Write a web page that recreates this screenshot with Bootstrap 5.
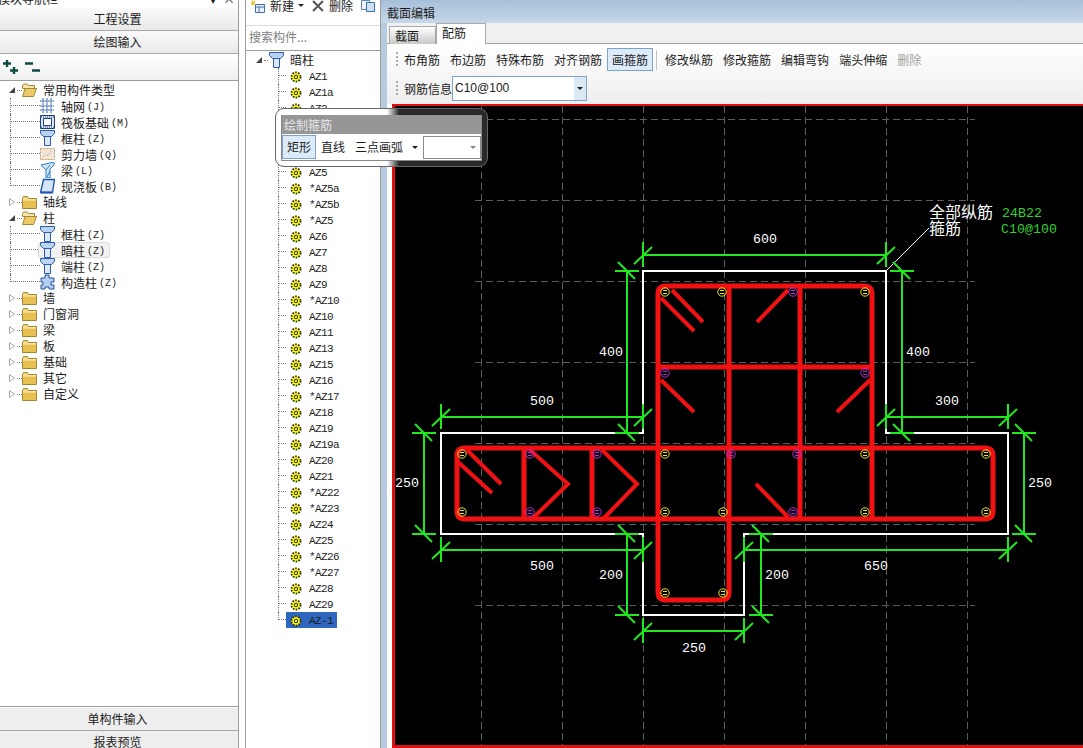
<!DOCTYPE html>
<html lang="zh-CN">
<head>
  <meta charset="UTF-8">
  <title>截面编辑</title>
  <link href="https://cdn.jsdelivr.net/npm/bootstrap@5.3.0/dist/css/bootstrap.min.css" rel="stylesheet">
  <style>
    body {
      margin: 0;
      background: #fff;
      overflow: hidden;
      color: #1c1c1c;
      font: 12px/16px "Liberation Mono", "Noto Sans CJK SC", monospace;
    }
    .app-frame { width: 1083px; height: 748px; overflow: hidden; position: relative; }
    .cjk { font-family: "Noto Sans CJK SC", sans-serif; }
    .flex-none { flex: none; }

    /* left navigation */
    .nav-col { width: 239px; border-right: 1px solid #9c9c9c; }
    .nav-title { height: 8px; overflow: hidden; }
    .nav-title-text { margin: -7px 0 0 -2px; line-height: 12px; }
    .nav-pin { margin: -7px 0 0 auto; padding-right: 3px; line-height: 12px; width: 28px; }
    .bar-btn {
      --bs-btn-padding-y: 0;
      --bs-btn-padding-x: 0;
      --bs-btn-font-size: 12px;
      --bs-btn-line-height: 1;
      height: 23px;
      width: 100%;
      padding-right: 3px;
      border: 0;
      border-bottom: 1px solid #a8a8a8;
      border-radius: 0;
      color: #1c1c1c;
      font-family: "Noto Sans CJK SC", sans-serif;
      background: linear-gradient(#fafafa, #e9e9e9);
      flex: none;
    }
    .bar-btn.flat { background: #eee; }
    .bar-btn.cut { height: 17px; padding-top: 5px; border-bottom: 0; line-height: 12px; vertical-align: top; display: block; }
    .bar-btn.first { margin-top: 1px; }
    .tool-strip { height: 26px; padding: 6px 3px 0; background: linear-gradient(#fff, #f0f0f0); gap: 6px; flex: none; }
    .nav-tree { border-top: 1px solid #9c9c9c; border-bottom: 1px solid #9c9c9c; padding-top: 1px; min-height: 0; }

    /* tree rows */
    .t-row { height: 16px; white-space: nowrap; }
    .t-twist { width: 8px; height: 8px; margin-left: 8px; flex: none; }
    .t-dot { width: 5px; margin: 0 0 0 1px; border-top: 1px dotted #888; flex: none; }
    .t-lnk { width: 30px; height: 16px; margin-left: 10px; border-left: 1px dotted #777; flex: none; align-self: flex-start; }
    .t-lnk::after { content: ""; display: block; margin-top: 7px; border-top: 1px dotted #777; }
    .t-lnk.last { height: 8px; }
    .t-hover { background: #f2f2f2; border: 1px solid #ddd; border-radius: 3px; margin: 0 0 0 -2px; padding: 0 4px 0 1px; height: 16px; }
    .t-label { margin-left: 6px; }
    .t-kid { margin-left: 6px; padding-top: 2px; }
    .t-code { font: 10px "Liberation Mono", monospace; margin-left: 2px; padding-top: 3px; }

    /* middle list */
    .list-col { width: 136px; margin-left: 6px; border-left: 1px solid #9c9c9c; border-right: 1px solid #9c9c9c; }
    .list-tools { height: 25px; padding-left: 4px; line-height: 12px; }
    .list-tools svg { flex: none; }
    .list-del { margin-left: 5px; }
    .list-search {
      height: 25px;
      padding: 0 3px 4px;
      border: 0;
      border-top: 1px solid #ddd;
      border-radius: 0;
      font: 12px "Noto Sans CJK SC", sans-serif;
      background: #fff;
    }
    .list-search::placeholder { color: #808080; opacity: 1; }
    .list-tree { border-top: 1px solid #9c9c9c; padding-top: 1px; }
    .az-head { padding-left: 1px; }
    .az-head .t-dot { width: 4px; margin-right: 1px; }
    .az-lnk { width: 8px; margin-left: 32px; }
    .az-name { padding: 2px 4px 0; height: 16px; gap: 7px; font-size: 11px; letter-spacing: -.6px; }
    .az-name.on { background: #2f66c0; }

    /* section editor */
    .edit-col { background: #b6cbe2; min-width: 0; }
    .edit-head { height: 23px; padding: 5px 0 0 6px; line-height: 16px; background: linear-gradient(#a6c0da, #c6d7e8); }
    .edit-body { padding-left: 6px; min-height: 0; }
    .edit-inner { background: #fff; min-height: 0; }
    .tab-strip { height: 21px; padding-left: 2px; background: #f0f0f0; border-bottom: 1px solid #a0a0a0; }
    .tab-strip .nav-link {
      width: 47px;
      height: 18px;
      margin-top: 3px;
      padding: 0 0 0 5px;
      line-height: 18px;
      color: #1c1c1c;
      border: 1px solid #a8a8a8;
      border-bottom: 0;
      border-radius: 0;
      background: linear-gradient(#fff, #c9c9c9);
      font-size: 12px;
    }
    .tab-strip .nav-link.active { height: 21px; margin-top: 0; background: #fff; padding: 0 0 0 5px; width: 50px; }
    .rib { height: 60px; padding: 3px 0 0 9px; background: linear-gradient(#fff, #eee); }
    .rib-row { height: 25px; gap: 0; }
    .rib-row + .rib-row { margin-top: 3px; height: 27px; }
    .rib-grip { width: 2px; height: 16px; margin-right: 1px; background: repeating-linear-gradient(#aaa 0 2px, transparent 2px 4px); }
    .rib-name { margin-left: 5px; }
    .rib-btn {
      --bs-btn-padding-x: 4px;
      --bs-btn-padding-y: 0;
      --bs-btn-font-size: 12px;
      --bs-btn-line-height: 21px;
      --bs-btn-color: #1c1c1c;
      --bs-btn-border-color: transparent;
      --bs-btn-border-radius: 0;
      --bs-btn-disabled-color: #a0a0a0;
      --bs-btn-disabled-border-color: transparent;
      --bs-btn-disabled-opacity: 1;
      height: 23px;
      font-family: "Noto Sans CJK SC", sans-serif;
    }
    .rib-btn.on { background: #dcebf8; border-color: #7da2ce; }
    .rib-sep { width: 1px; height: 20px; margin: 0 3px; background: #c4c4c4; }
    .bar-combo { width: 135px; height: 25px; border: 1px solid #7da2ce; background: #fff; font: 12px/23px "Liberation Sans", sans-serif; padding-left: 2px; }
    .combo-arrow { width: 12px; margin-left: auto; background: #dbe9f5; }
    .cad-view { margin-left: 5px; background: #000; border-top: 2px solid #e01010; border-left: 3px solid #e01010; border-bottom: 3px solid #e01010; min-height: 0; overflow: hidden; }
    .cad-view svg { display: block; }
    .cad-num { fill: #fff; font: 13.3px "Liberation Mono", monospace; text-anchor: middle; }
    .cad-note { fill: #fff; font: 16px "Noto Sans CJK SC", sans-serif; }
    .cad-spec { fill: #2fd02f; font: 13.3px "Liberation Mono", monospace; }

    /* floating stirrup toolbar */
    .float-bar {
      position: absolute;
      left: 275px;
      top: 108px;
      width: 213px;
      height: 59px;
      padding: 6px 5px;
      border: 1px solid #666;
      border-radius: 9px;
      background: linear-gradient(to right, #fff 111px, #2a2a2a 123px);
    }
    .float-inner { background: #fff; height: 46px; border: 1px solid #8a8a8a; border-top: 0; }
    .float-title { height: 19px; padding-left: 2px; background: #969696; color: #e8e8e8; line-height: 19px; }
    .float-tools { height: 26px; white-space: nowrap; font-family: "Noto Sans CJK SC", sans-serif; }
    .float-btn { padding: 0 4px; height: 24px; line-height: 22px; border: 1px solid transparent; flex: none; }
    .float-btn.on { background: #dcebf8; border-color: #7da2ce; width: 34px; }
    .float-combo { width: 58px; height: 23px; margin-left: auto; border: 1px solid #8a8a8a; padding-right: 4px; flex: none; }
    .caret-mini { width: 0; height: 0; border-left: 3px solid transparent; border-right: 3px solid transparent; border-top: 3px solid #222; flex: none; }
    .caret-mini.dim { border-top-color: #888; }
  </style>
</head>
<body>
  <svg class="d-none">
    <symbol id="i-gear" viewBox="0 0 12 12">
      <circle cx="6" cy="6" r="4.6" fill="#f6f21c" stroke="#2e2e00" stroke-width="1.8" stroke-dasharray="1.6 1.3"/>
      <circle cx="6" cy="6" r="1.7" fill="#f6f21c" stroke="#2e2e00" stroke-width="1"/>
    </symbol>
    <symbol id="i-col" viewBox="0 0 15 16">
      <path d="M.5 .5h14v3l-3 3h-8l-3-3z" fill="#bcd2f2" stroke="#2a5aa8"/>
      <path d="M4.500 6.500h6v9h-6z" fill="#dce8fa" stroke="#2a5aa8"/>
    </symbol>
    <symbol id="i-grid" viewBox="0 0 15 16">
      <path d="M3 0v15M7 0v15M11 0v15M0 3h14M0 8h14M0 12h14" stroke="#2a5aa8" stroke-width="1" stroke-dasharray="2 .6" fill="none"/>
    </symbol>
    <symbol id="i-raft" viewBox="0 0 15 16">
      <path d="M.5 1.500h14v13H.5z" fill="#dbe6f6" stroke="#1d3f86"/>
      <path d="M3.500 4.500h8v7h-8z" fill="#fff" stroke="#1d3f86"/>
      <path d="M1 3h13M1 13h13" stroke="#1d3f86" stroke-dasharray="1 1"/>
    </symbol>
    <symbol id="i-wall" viewBox="0 0 15 16">
      <path d="M.5 2.500h14v11H.5z" fill="#f3e6d8" stroke="#c89a70" stroke-dasharray="2 1"/>
      <path d="M3 11l3-3 2 2 3-5" fill="none" stroke="#aaa" stroke-dasharray="1 1"/>
    </symbol>
    <symbol id="i-beam" viewBox="0 0 15 16">
      <path d="M1 3l13-3v3l-4 4v9H6V8z" fill="#cfe4f8" stroke="#2f7fc0"/>
      <path d="M6 8l4-5M7 15l3-6" stroke="#2f7fc0" fill="none"/>
    </symbol>
    <symbol id="i-slab" viewBox="0 0 15 16">
      <path d="M3.500 1.500h11l-2 13H.5z" fill="#d6e4f8" stroke="#1f56b0" stroke-width="1.400"/>
      <path d="M1 14.500h11" stroke="#1f56b0" stroke-width="2"/>
    </symbol>
    <symbol id="i-gz" viewBox="0 0 15 16">
      <path d="M5 1h4v3h5v4h-3v3h3v4H9v-2H5v2H1v-4h2V8H1V4h4z" fill="#b6cff2" stroke="#23509e"/>
    </symbol>
    <symbol id="i-fold" viewBox="0 0 15 14">
      <path d="M.5 3.500l1-2h4l1 2h8v10H.5z" fill="#f0d67c" stroke="#a58632"/>
      <path d="M1 5h13v8H1z" fill="#e9c052"/>
      <path d="M1 5h13" stroke="#fbeeb8"/>
    </symbol>
    <symbol id="i-open" viewBox="0 0 15 14">
      <path d="M.5 2.500l1-1.500h4l1 1.500h6v3H.5z" fill="#f5e6b0" stroke="#a58632"/>
      <path d="M3 5.500h11.500l-3 8H.5z" fill="#eccb68" stroke="#a58632"/>
    </symbol>
  </svg>

  <div class="app-frame d-flex">
    <!-- module navigation -->
    <aside class="nav-col d-flex flex-column flex-none">
      <div class="nav-title d-flex cjk flex-none">
        <div class="nav-title-text">模块导航栏</div>
        <div class="nav-pin d-flex justify-content-between">▾<span>×</span></div>
      </div>
      <button class="btn bar-btn">工程设置</button>
      <button class="btn bar-btn">绘图输入</button>
      <div class="tool-strip d-flex">
        <svg width="16" height="15" viewBox="0 0 16 15"><path d="M0 3.500h8M4 0v7M7 10.500h8M11 7v7" stroke="#0e4a45" stroke-width="2.400" fill="none"/></svg>
        <svg width="16" height="15" viewBox="0 0 16 15"><path d="M0 3.500h8M7 10.500h8" stroke="#0e4a45" stroke-width="2.400" fill="none"/></svg>
      </div>
      <div class="nav-tree flex-grow-1 cjk" id="navTree"></div>
      <button class="btn bar-btn flat first">单构件输入</button>
      <button class="btn bar-btn flat cut">报表预览</button>
    </aside>

    <!-- component list -->
    <section class="list-col d-flex flex-column flex-none">
      <div class="list-tools d-flex cjk">
        <svg width="16" height="14" viewBox="0 0 16 14"><path d="M2 0l1.500 1.500L6 1 4.500 3 5 5H1z" fill="#f3c623"/><path d="M5.500 4.500h9v8h-9z" fill="#eaf1fb" stroke="#3f6fa8"/><path d="M6 7h8M9 7v5" stroke="#3f6fa8"/></svg>
        <span class="ms-1">新建</span>
        <span class="ms-1 mt-1 caret-mini"></span>
        <svg class="ms-2" width="12" height="12" viewBox="0 0 12 12"><path d="M1 1l10 10M11 1L1 11" stroke="#555" stroke-width="2"/></svg>
        <span class="list-del">删除</span>
        <svg class="ms-2" width="14" height="12" viewBox="0 0 14 12"><path d="M.5 .5h8v9h-8z" fill="#eef4fc" stroke="#5b85b8"/><path d="M5.500 2.500h8v9h-8z" fill="#cfe0f5" stroke="#3f6fa8"/></svg>
      </div>
      <input class="form-control list-search" type="text" placeholder="搜索构件...">
      <div class="list-tree flex-grow-1" id="azTree"></div>
    </section>

    <!-- section editor -->
    <main class="edit-col d-flex flex-column flex-grow-1">
      <div class="edit-head cjk">截面编辑</div>
      <div class="edit-body d-flex flex-column flex-grow-1">
        <div class="edit-inner d-flex flex-column flex-grow-1">
          <ul class="nav tab-strip cjk">
            <li class="nav-item"><a class="nav-link" href="#">截面</a></li>
            <li class="nav-item"><a class="nav-link active" href="#">配筋</a></li>
          </ul>
          <div class="rib">
            <div class="rib-row d-flex align-items-center" id="ribTools"></div>
            <div class="rib-row d-flex align-items-center">
              <span class="rib-grip"></span>
              <span class="cjk rib-name">钢筋信息</span>
              <div class="bar-combo d-flex">C10@100<span class="combo-arrow d-flex align-items-center justify-content-center"><i class="caret-mini"></i></span></div>
            </div>
          </div>
          <div class="cad-view flex-grow-1">
            <svg id="cad" width="688" height="639" viewBox="395 106 688 639">
              <g id="cadGrid" stroke="#5c5c5c" stroke-dasharray="7 4"></g>
              <path d="M643 271H886V433H1008V534H744V615H643V534H441V433H643Z" fill="none" stroke="#fff" stroke-width="2"/>
              <g fill="none" stroke="#f01212" stroke-width="5">
                <path d="M658 294Q658 286 666 286H864Q872 286 872 294V519"/>
                <path d="M658 294V592Q658 600 666 600H721Q729 600 729 592V286"/>
                <path d="M800 286V519M592 448V519M524 448V519"/>
                <path d="M658 367H872"/>
                <path d="M465 448H985Q993 448 993 456V511Q993 519 985 519H465Q457 519 457 511V456Q457 448 465 448Z"/>
                <path d="M530 450L568 484L532 519M602 450L637 484L603 519" stroke-width="4"/>
                <path d="M467 450L501 484M458 462L492 493M672 290L703 322M661 298L694 331M757 322L788 290M661 380L694 412M837 412L870 380M756 484L788 517" stroke-width="4"/>
              </g>
              <g id="cadBars" fill="none"></g>
              <path d="M886 271L929 228" stroke="#fff"/>
              <g id="cadDims" stroke="#1fe81f" stroke-width="2"></g>
              <g id="cadText"></g>
              <text class="cad-note" x="929" y="218">全部纵筋</text>
              <text class="cad-note" x="929" y="234">箍筋</text>
              <text class="cad-spec" x="1002" y="217">24B22</text>
              <text class="cad-spec" x="1001" y="233">C10@100</text>
            </svg>
          </div>
        </div>
      </div>
    </main>

    <!-- floating toolbar over the list and the drawing -->
    <div class="float-bar cjk">
      <div class="float-inner">
        <div class="float-title">绘制箍筋</div>
        <div class="float-tools d-flex align-items-center">
          <span class="float-btn on">矩形</span>
          <span class="float-btn">直线</span>
          <span class="float-btn">三点画弧</span>
          <span class="caret-mini ms-1"></span>
          <span class="float-combo d-flex align-items-center justify-content-end"><i class="caret-mini dim"></i></span>
        </div>
      </div>
    </div>
  </div>

  <script src="https://cdn.jsdelivr.net/npm/bootstrap@5.3.0/dist/js/bootstrap.bundle.min.js"></script>
  <script>
    const openTwist = '<svg class="t-twist" viewBox="0 0 8 8"><path d="M1 7L7 1V7Z" fill="#444"/></svg>';
    const shutTwist = '<svg class="t-twist" viewBox="0 0 8 8"><path d="M1.500 .5L6.500 4L1.500 7.500Z" fill="#fff" stroke="#a8a8a8"/></svg>';

    function icon(id, w, h) {
      return `<svg width="${w}" height="${h}" class="flex-none"><use href="#${id}"/></svg>`;
    }

    // left tree: folders with optional children
    const navData = [
      { name: "常用构件类型", open: true, kids: [
        ["轴网", "(J)", "i-grid"], ["筏板基础", "(M)", "i-raft"], ["框柱", "(Z)", "i-col"],
        ["剪力墙", "(Q)", "i-wall"], ["梁", "(L)", "i-beam"], ["现浇板", "(B)", "i-slab"]
      ]},
      { name: "轴线" },
      { name: "柱", open: true, kids: [
        ["框柱", "(Z)", "i-col"], ["暗柱", "(Z)", "i-col", true], ["端柱", "(Z)", "i-col"], ["构造柱", "(Z)", "i-gz"]
      ]},
      { name: "墙" }, { name: "门窗洞" }, { name: "梁" }, { name: "板" },
      { name: "基础" }, { name: "其它" }, { name: "自定义" }
    ];

    let navHtml = "";
    navData.forEach(folder => {
      navHtml += `<div class="t-row d-flex align-items-center">${folder.open ? openTwist : shutTwist}<span class="t-dot"></span>${icon(folder.open ? "i-open" : "i-fold", 15, 14)}<span class="t-label">${folder.name}</span></div>`;
      (folder.kids || []).forEach((kid, i) => {
        const last = i === folder.kids.length - 1 ? " last" : "";
        const inner = `${icon(kid[2], 15, 16)}<span class="t-kid">${kid[0]}</span><span class="t-code">${kid[1]}</span>`;
        navHtml += `<div class="t-row d-flex align-items-center"><span class="t-lnk${last}"></span>${kid[3] ? `<span class="t-hover d-flex align-items-center">${inner}</span>` : inner}</div>`;
      });
    });
    document.getElementById("navTree").innerHTML = navHtml;

    // middle tree: all the AZ components
    const azNames = ["AZ1", "AZ1a", "AZ2", "AZ3", "AZ3a", "AZ4", "AZ5", "*AZ5a", "*AZ5b", "*AZ5", "AZ6", "AZ7", "AZ8", "AZ9",
      "*AZ10", "AZ10", "AZ11", "AZ13", "AZ15", "AZ16", "*AZ17", "AZ18", "AZ19", "AZ19a", "AZ20", "AZ21",
      "*AZ22", "*AZ23", "AZ24", "AZ25", "*AZ26", "*AZ27", "AZ28", "AZ29", "AZ-1"];

    let azHtml = `<div class="t-row az-head d-flex align-items-center cjk">${openTwist}<span class="t-dot"></span>${icon("i-col", 15, 16)}<span class="t-label">暗柱</span></div>`;
    azNames.forEach((name, i) => {
      const last = i === azNames.length - 1;
      azHtml += `<div class="t-row d-flex align-items-center"><span class="t-lnk az-lnk${last ? " last" : ""}"></span><span class="az-name d-flex align-items-center${last ? " on" : ""}">${icon("i-gear", 12, 12)}${name}</span></div>`;
    });
    document.getElementById("azTree").innerHTML = azHtml;

    // ribbon buttons
    const ribBtns = ["布角筋", "布边筋", "特殊布筋", "对齐钢筋", "画箍筋|on", "|", "修改纵筋", "修改箍筋", "编辑弯钩", "端头伸缩", "删除|off"];
    let ribHtml = '<span class="rib-grip"></span>';
    ribBtns.forEach(b => {
      const [label, state] = b.split("|");
      if (!label) { ribHtml += '<span class="rib-sep"></span>'; return; }
      ribHtml += `<button class="btn rib-btn${state === "on" ? " on" : ""}"${state === "off" ? " disabled" : ""}>${label}</button>`;
    });
    document.getElementById("ribTools").innerHTML = ribHtml;

    // drawing: dashed grid
    let grid = "";
    [481, 562, 643, 724, 805, 886, 967].forEach(x => { grid += `<path d="M${x + .5} 106V748"/>`; });
    [119, 200, 281, 362, 443, 524, 605].forEach(y => { grid += `<path d="M475 ${y + .5}H975"/>`; });
    document.getElementById("cadGrid").innerHTML = grid;

    // drawing: longitudinal bars, y = yellow, p = purple
    const bars = [
      [665, 292, "y"], [722, 292, "y"], [793, 292, "p"], [865, 292, "y"], [665, 373, "p"], [865, 373, "p"],
      [462, 454, "y"], [530, 454, "p"], [597, 454, "p"], [665, 454, "y"], [731, 454, "p"], [797, 454, "p"], [865, 454, "y"], [986, 454, "y"],
      [462, 512, "y"], [530, 512, "p"], [597, 512, "p"], [665, 512, "y"], [723, 512, "y"], [793, 512, "p"], [865, 512, "y"], [986, 512, "y"],
      [665, 593, "y"], [723, 593, "y"]
    ];
    document.getElementById("cadBars").innerHTML = bars.map(([x, y, c]) => {
      const col = c === "y" ? "#f0e61e" : "#b030d8";
      return `<g stroke="${col}"><circle cx="${x}" cy="${y}" r="4.200"/><path d="M${x - 2} ${y - 1.500}h4M${x - 2} ${y + 1.500}h4"/></g>`;
    }).join("");

    // drawing: dimension lines
    const hDims = [[255, 643, 886], [417, 441, 643], [417, 886, 1008], [550, 441, 643], [550, 744, 1008], [631, 643, 744]];
    const vDims = [[627, 271, 433], [902, 271, 433], [424, 433, 534], [1024, 433, 534], [627, 534, 615], [761, 534, 615]];
    let dims = "";
    hDims.forEach(([y, a, b]) => {
      dims += `<path d="M${a} ${y}H${b}"/>`;
      [a, b].forEach(x => { dims += `<path d="M${x} ${y - 13}V${y + 12}M${x - 9} ${y + 9}L${x + 9} ${y - 8}"/>`; });
    });
    vDims.forEach(([x, a, b]) => {
      dims += `<path d="M${x} ${a}V${b}"/>`;
      [a, b].forEach(y => { dims += `<path d="M${x - 12} ${y}H${x + 12}M${x - 9} ${y - 9}L${x + 8} ${y + 8}"/>`; });
    });
    document.getElementById("cadDims").innerHTML = dims;

    // drawing: dimension values
    const nums = [["600", 765, 243], ["400", 611, 356], ["400", 918, 356], ["500", 542, 405], ["300", 947, 405],
      ["250", 407, 487], ["250", 1040, 487], ["500", 542, 570], ["650", 876, 570], ["200", 611, 579], ["200", 777, 579], ["250", 694, 652]];
    document.getElementById("cadText").innerHTML = nums.map(([t, x, y]) => `<text class="cad-num" x="${x}" y="${y}">${t}</text>`).join("");
  </script>
</body>
</html>
